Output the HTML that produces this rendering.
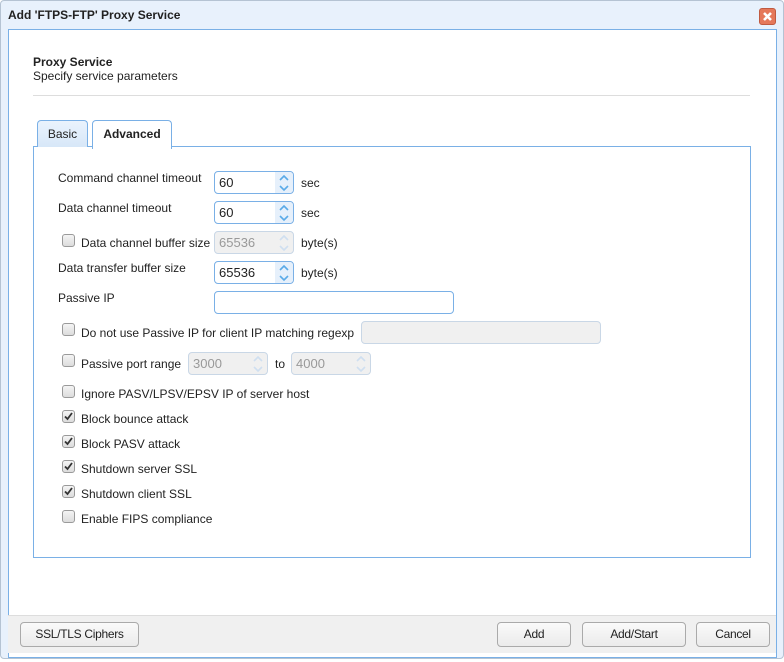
<!DOCTYPE html><html><head><style>
body{margin:0;width:784px;height:662px;background:#fff;font-family:"Liberation Sans",sans-serif;font-size:12px;color:#222;position:relative;overflow:hidden}
.a{position:absolute;white-space:nowrap}
.win{position:absolute;left:0;top:0;width:782px;height:657px;border:1px solid #b5c3d3;border-radius:4px;background:#e8f1fc}
.panel{position:absolute;left:8px;top:29px;width:767px;height:627px;border:1px solid #7ab0e6;background:#fff}
.inp{position:absolute;height:21px;border:1px solid #7ab0e6;border-radius:4px;background:#fff;font-size:13px;line-height:21px;padding-left:4px;box-sizing:content-box}
.dis{background:#f0f0f0;border-color:#c9d7e6;color:#999}
.sp{position:absolute;right:0;top:0;width:18px;height:21px;background:#e6f0fb;border-radius:0 4px 4px 0}
.dis .sp{background:#f0f0f0}
.sp svg{position:absolute;left:3px;top:2px}
.cb{position:absolute;width:11px;height:11px;border:1px solid #9a9a9a;border-radius:3px;background:linear-gradient(#f4f4f4,#dcdcdc)}
.btn{position:absolute;top:622px;height:23px;border:1px solid #aaa;border-radius:4px;background:linear-gradient(#fafafa,#ebebeb);text-align:center;line-height:23px;font-size:12px;letter-spacing:-0.3px}
</style></head><body>
<div class="win"></div>
<div class="a" style="left:8px;top:8px;font-weight:bold">Add 'FTPS-FTP' Proxy Service</div>
<div class="a" style="left:759px;top:8px;width:15px;height:15px;background:#e5785a;border:1px solid #c05a40;border-radius:3px"><svg width="15" height="15"><path d="M4 4L11 11M11 4L4 11" stroke="#fff" stroke-width="2.6"/></svg></div>
<div class="panel"></div>
<div class="a" style="left:8px;top:615px;width:768px;height:37px;background:#f0f0f0;border-top:1px solid #ddd"></div>
<div class="a" style="left:33px;top:55px;font-weight:bold">Proxy Service</div>
<div class="a" style="left:33px;top:69px">Specify service parameters</div>
<div class="a" style="left:33px;top:95px;width:717px;height:1px;background:#ddd"></div>
<div class="a" style="left:33px;top:146px;width:716px;height:410px;border:1px solid #7ab0e6"></div>
<div class="a" style="left:37px;top:120px;width:49px;height:26px;border:1px solid #7ab0e6;border-bottom:none;border-radius:4px 4px 0 0;background:linear-gradient(#eaf3fd,#d7e7f8);text-align:center;line-height:26px">Basic</div>
<div class="a" style="left:92px;top:120px;width:78px;height:28px;border:1px solid #7ab0e6;border-bottom:none;border-radius:4px 4px 0 0;background:#fff;text-align:center;line-height:26px;font-weight:bold">Advanced</div>

<div class="a" style="left:58px;top:171px">Command channel timeout</div>
<div class="inp" style="left:214px;top:171px;width:74px">60<div class="sp"><svg width="12" height="18"><path d="M2 6L6 2L10 6M2 12L6 16L10 12" stroke="#5aaae8" stroke-width="1.6" fill="none"/></svg></div></div>
<div class="a" style="left:301px;top:176px">sec</div>

<div class="a" style="left:58px;top:201px">Data channel timeout</div>
<div class="inp" style="left:214px;top:201px;width:74px">60<div class="sp"><svg width="12" height="18"><path d="M2 6L6 2L10 6M2 12L6 16L10 12" stroke="#5aaae8" stroke-width="1.6" fill="none"/></svg></div></div>
<div class="a" style="left:301px;top:206px">sec</div>

<div class="cb" style="left:62px;top:234px"></div>
<div class="a" style="left:81px;top:236px">Data channel buffer size</div>
<div class="inp dis" style="left:214px;top:231px;width:74px">65536<div class="sp"><svg width="12" height="18"><path d="M2 6L6 2L10 6M2 12L6 16L10 12" stroke="#cfdff0" stroke-width="1.6" fill="none"/></svg></div></div>
<div class="a" style="left:301px;top:236px">byte(s)</div>

<div class="a" style="left:58px;top:261px">Data transfer buffer size</div>
<div class="inp" style="left:214px;top:261px;width:74px">65536<div class="sp"><svg width="12" height="18"><path d="M2 6L6 2L10 6M2 12L6 16L10 12" stroke="#5aaae8" stroke-width="1.6" fill="none"/></svg></div></div>
<div class="a" style="left:301px;top:266px">byte(s)</div>

<div class="a" style="left:58px;top:291px">Passive IP</div>
<div class="inp" style="left:214px;top:291px;width:234px"></div>

<div class="cb" style="left:62px;top:323px"></div>
<div class="a" style="left:81px;top:326px">Do not use Passive IP for client IP matching regexp</div>
<div class="inp dis" style="left:361px;top:321px;width:234px"></div>

<div class="cb" style="left:62px;top:354px"></div>
<div class="a" style="left:81px;top:357px">Passive port range</div>
<div class="inp dis" style="left:188px;top:352px;width:74px">3000<div class="sp"><svg width="12" height="18"><path d="M2 6L6 2L10 6M2 12L6 16L10 12" stroke="#cfdff0" stroke-width="1.6" fill="none"/></svg></div></div>
<div class="a" style="left:275px;top:357px">to</div>
<div class="inp dis" style="left:291px;top:352px;width:74px">4000<div class="sp"><svg width="12" height="18"><path d="M2 6L6 2L10 6M2 12L6 16L10 12" stroke="#cfdff0" stroke-width="1.6" fill="none"/></svg></div></div>

<div class="cb" style="left:62px;top:385px"></div><div class="a" style="left:81px;top:387px">Ignore PASV/LPSV/EPSV IP of server host</div>
<div class="cb" style="left:62px;top:410px"><svg class="a" width="11" height="11"><path d="M2 5.5L4.5 8L9 2" stroke="#333" stroke-width="1.8" fill="none"/></svg></div><div class="a" style="left:81px;top:412px">Block bounce attack</div>
<div class="cb" style="left:62px;top:435px"><svg class="a" width="11" height="11"><path d="M2 5.5L4.5 8L9 2" stroke="#333" stroke-width="1.8" fill="none"/></svg></div><div class="a" style="left:81px;top:437px">Block PASV attack</div>
<div class="cb" style="left:62px;top:460px"><svg class="a" width="11" height="11"><path d="M2 5.5L4.5 8L9 2" stroke="#333" stroke-width="1.8" fill="none"/></svg></div><div class="a" style="left:81px;top:462px">Shutdown server SSL</div>
<div class="cb" style="left:62px;top:485px"><svg class="a" width="11" height="11"><path d="M2 5.5L4.5 8L9 2" stroke="#333" stroke-width="1.8" fill="none"/></svg></div><div class="a" style="left:81px;top:487px">Shutdown client SSL</div>
<div class="cb" style="left:62px;top:510px"></div><div class="a" style="left:81px;top:512px">Enable FIPS compliance</div>

<div class="btn" style="left:20px;width:117px">SSL/TLS Ciphers</div>
<div class="btn" style="left:497px;width:72px">Add</div>
<div class="btn" style="left:582px;width:102px">Add/Start</div>
<div class="btn" style="left:696px;width:72px">Cancel</div>
</body></html>
